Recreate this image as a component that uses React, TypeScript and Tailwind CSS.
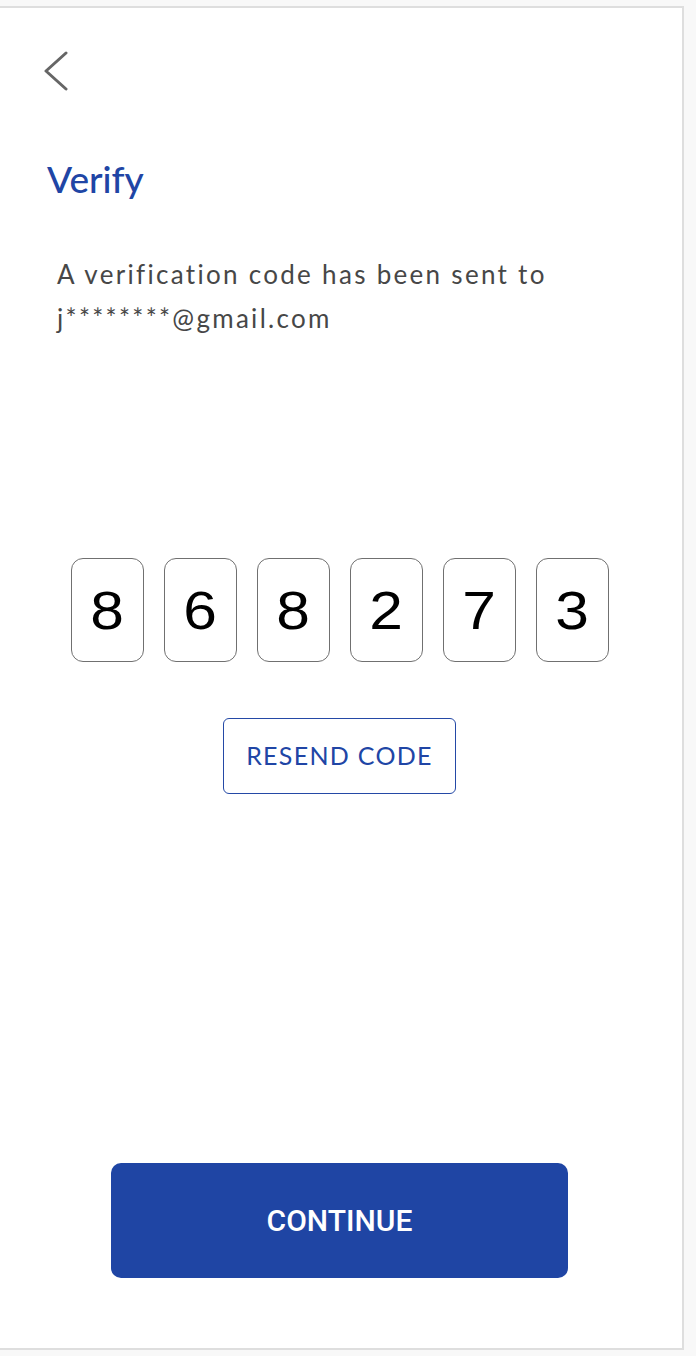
import React from "react";

export default function App() {
  const digits = ["8", "6", "8", "2", "7", "3"];
  return (
    <div className="w-[696px] h-[1356px] bg-[#f8f8f8] pt-[6px]">
      <div className="w-[684px] h-[1344px] bg-white border-t-2 border-r-2 border-b-2 border-[#dedede] pr-[3px] flex flex-col">
        <div className="pl-[43px] pt-[43px]">
          <svg width="26" height="40" viewBox="0 0 26 40" fill="none">
            <path d="M23 2 L3 20 L23 38" stroke="#666666" strokeWidth="3" strokeLinecap="round" strokeLinejoin="round" />
          </svg>
        </div>
        <h1 className="ml-[47px] mt-[70px] text-[37px] leading-[36px] font-medium text-[#2045a5] font-['Lato',sans-serif]">
          Verify
        </h1>
        <p className="ml-[57px] mt-[55px] text-[26px] leading-[44px] tracking-[2.3px] text-[#474747] font-['Lato',sans-serif]">
          A verification code has been sent to
          <br />
          j********@gmail.com
        </p>
        <div className="mt-[218px] flex justify-center gap-[20px]">
          {digits.map((d, i) => (
            <div
              key={i}
              className="w-[73px] h-[104px] rounded-[12px] border-[1.5px] border-[#707070] flex items-center justify-center text-[54px] text-black font-['Liberation_Sans',Arial,sans-serif]"
            >
              <span className="inline-block scale-x-[1.12]">{d}</span>
            </div>
          ))}
        </div>
        <div className="mt-[56px] flex justify-center">
          <button className="w-[233px] h-[76px] rounded-[6px] border-[1.5px] border-[#2449a6] text-[#2045a5] text-[25px] tracking-[1.3px] font-['Lato',sans-serif]">
            RESEND CODE
          </button>
        </div>
        <div className="mt-[369px] flex justify-center">
          <button className="w-[457px] h-[115px] rounded-[10px] bg-[#1f45a4] text-white text-[30px] font-medium font-['Roboto',sans-serif]">
            CONTINUE
          </button>
        </div>
      </div>
    </div>
  );
}
